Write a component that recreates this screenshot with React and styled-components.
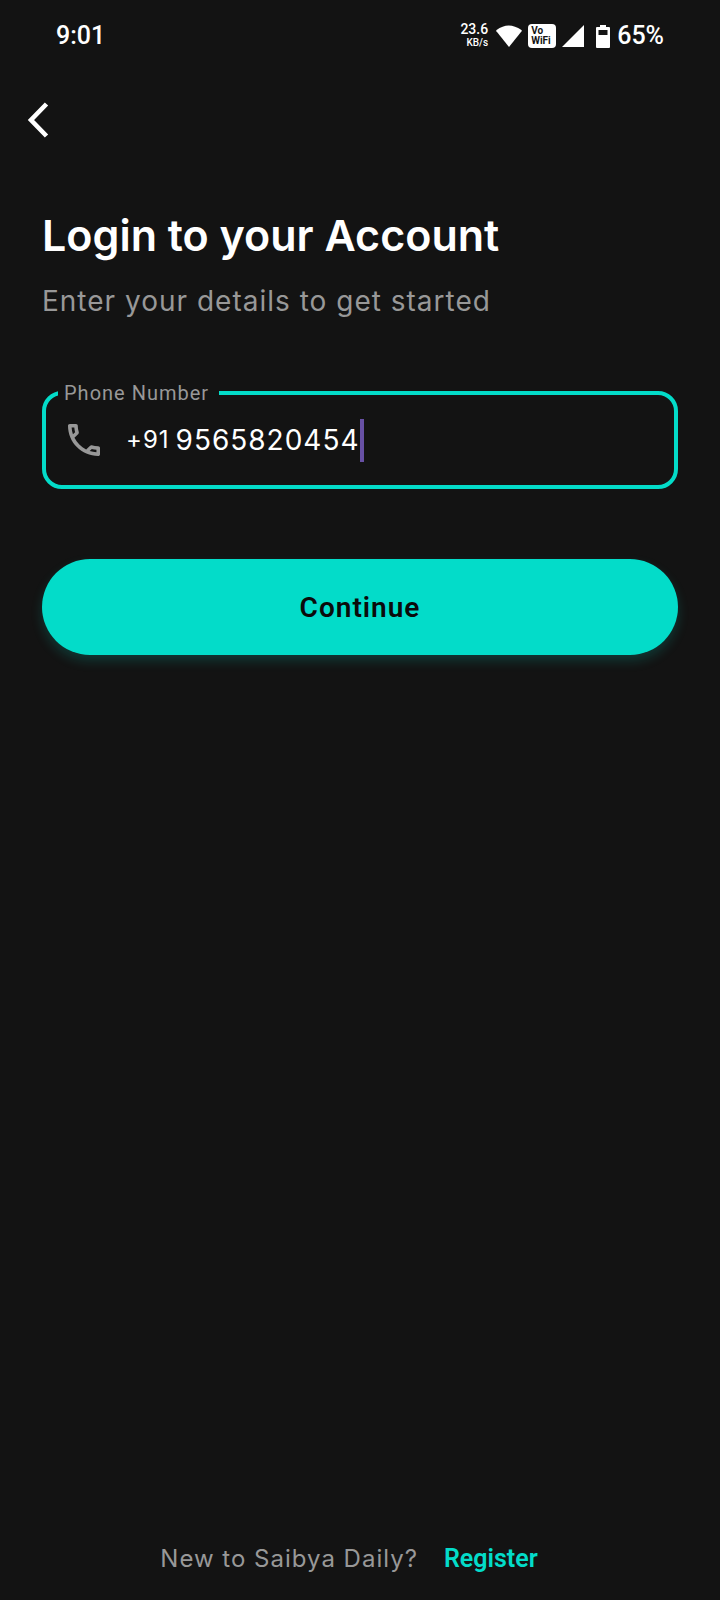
import React, { useState } from "react";
import styled, { createGlobalStyle } from "styled-components";

const teal = "#03dcc9";
const muted = "#989898";

const GlobalStyle = createGlobalStyle`
  * { box-sizing: border-box; }
  body { margin: 0; background: #131313; }
  button, input { font: inherit; letter-spacing: inherit; }
`;

const Screen = styled.div`
  min-height: 100vh;
  display: flex;
  flex-direction: column;
  background: #131313;
  color: #fff;
  font-family: Inter, "Liberation Sans", sans-serif;
`;

const StatusBar = styled.header`
  display: flex;
  align-items: center;
  justify-content: space-between;
  height: 72px;
  padding: 0 56px;
  font-family: Roboto, sans-serif;
  font-size: 25px;
  font-weight: 500;
  line-height: 28px;
`;

const StatusIcons = styled.div`
  display: flex;
  align-items: center;
  gap: 6px;
  svg { display: block; }
`;

const NetSpeed = styled.div`
  display: flex;
  flex-direction: column;
  align-items: flex-end;
  padding: 0 2px 2px 0;
  font-size: 14px;
  line-height: 16px;
`;

const NetUnit = styled.span`
  font-size: 10px;
  line-height: 12px;
`;

const VoWifi = styled.span`
  display: flex;
  flex-direction: column;
  width: 28px;
  height: 24px;
  padding: 2px 3px;
  border-radius: 4px;
  background: #fff;
  color: #131313;
  font-size: 10px;
  font-weight: 700;
  line-height: 10px;
`;

const Battery = styled.span`
  display: flex;
  align-items: center;
  gap: 7px;
  padding-left: 6px;
`;

const BackButton = styled.button`
  align-self: flex-start;
  display: flex;
  margin-top: 26px;
  padding: 4px 24px;
  border: 0;
  background: none;
  color: #fff;
`;

const Form = styled.form`
  display: flex;
  flex-direction: column;
  padding: 65px 42px 0;
`;

const Title = styled.h1`
  margin: 0;
  font-size: 43px;
  font-weight: 600;
  line-height: 56px;
`;

const Subtitle = styled.p`
  margin: 20px 0 0;
  color: ${muted};
  font-size: 28px;
  line-height: 36px;
  letter-spacing: 1px;
`;

const Field = styled.fieldset`
  min-width: 0;
  margin: 62px 0 0;
  padding: 0 22px;
  border: 4px solid ${teal};
  border-radius: 20px;
`;

const Legend = styled.legend`
  margin-left: -10px;
  padding: 0 10px 0 6px;
  color: ${muted};
  font-family: Roboto, sans-serif;
  font-size: 20px;
  line-height: 24px;
  letter-spacing: 1px;
`;

const FieldRow = styled.div`
  display: flex;
  align-items: center;
  height: 80px;
  padding-bottom: 10px;
`;

const Prefix = styled.span`
  margin: 0 6px 0 26px;
  font-size: 24px;
  line-height: 44px;
  letter-spacing: 1px;
`;

const PhoneInput = styled.input`
  field-sizing: content;
  min-width: 1px;
  padding: 0;
  border: 0;
  outline: 0;
  background: none;
  color: #fff;
  font-size: 28px;
  line-height: 44px;
  letter-spacing: 1px;
`;

const Caret = styled.span`
  width: 4px;
  height: 43px;
  background: #6750a4;
`;

const Continue = styled.button`
  height: 96px;
  margin-top: 70px;
  border: 0;
  border-radius: 48px;
  background: ${teal};
  box-shadow: 0 6px 12px rgba(3, 220, 201, 0.18);
  color: #0b0b0b;
  font-family: Roboto, sans-serif;
  font-size: 28px;
  font-weight: 600;
  letter-spacing: 1px;
`;

const Footer = styled.footer`
  display: flex;
  justify-content: center;
  gap: 26px;
  margin-top: auto;
  padding: 0 22px 25px 0;
  color: ${muted};
  font-size: 24px;
  line-height: 32px;
`;

const FooterText = styled.span`
  letter-spacing: 1px;
`;

const RegisterLink = styled.a`
  color: ${teal};
  font-family: Roboto, sans-serif;
  font-size: 25px;
  font-weight: 600;
  text-decoration: none;
`;

const WifiIcon = () => (
  <svg width="26" height="22" viewBox="0 0 26 22" aria-hidden="true">
    <path d="M13 22 .4 6.2Q0 5.6.6 5.1 12.500-4.100 25.400 5.100q.6.5.2 1.100Z" fill="#fff" />
  </svg>
);

const SignalIcon = () => (
  <svg width="22" height="22" viewBox="0 0 22 22" aria-hidden="true">
    <path d="M0 22 22 0V22Z" fill="#fff" />
  </svg>
);

const BatteryIcon = () => (
  <svg width="14" height="23" viewBox="0 0 14 23" aria-hidden="true">
    <path
      fill="#fff"
      fillRule="evenodd"
      d="M4 0h6v2h3q1 0 1 1v19q0 1-1 1H1q-1 0-1-1V3q0-1 1-1h3ZM2.500 5v5h9V5Z"
    />
  </svg>
);

const BackIcon = () => (
  <svg width="28" height="36" viewBox="0 0 28 36" fill="none" aria-hidden="true">
    <path d="M22.500 2 7 18 22.500 34" stroke="currentColor" strokeWidth="4.600" />
  </svg>
);

const PhoneIcon = () => (
  <svg width="32" height="32" viewBox="3 3 18 18" aria-hidden="true">
    <path
      fill={muted}
      d="M6.540 5c.06.89.21 1.760.45 2.590l-1.200 1.200c-.41-1.200-.67-2.470-.76-3.790h1.510m9.860 12.020c.85.24 1.720.39 2.600.45v1.490c-1.320-.09-2.590-.35-3.800-.75l1.200-1.190M7.500 3H4c-.55 0-1 .45-1 1 0 9.390 7.610 17 17 17 .55 0 1-.45 1-1v-3.490c0-.55-.45-1-1-1-1.240 0-2.450-.2-3.570-.57-.1-.04-.21-.05-.31-.05-.26 0-.51.1-.71.29l-2.200 2.200c-2.830-1.450-5.150-3.760-6.590-6.590l2.200-2.200c.28-.28.36-.67.25-1.020C8.700 6.450 8.500 5.250 8.500 4c0-.55-.45-1-1-1z"
    />
  </svg>
);

export default function App() {
  const [phone, setPhone] = useState("9565820454");
  return (
    <>
      <GlobalStyle />
      <Screen>
        <StatusBar>
          <time>9:01</time>
          <StatusIcons>
            <NetSpeed>
              23.6
              <NetUnit>KB/s</NetUnit>
            </NetSpeed>
            <WifiIcon />
            <VoWifi>
              <span>Vo</span>
              <span>WiFi</span>
            </VoWifi>
            <SignalIcon />
            <Battery>
              <BatteryIcon />
              65%
            </Battery>
          </StatusIcons>
        </StatusBar>
        <BackButton type="button" aria-label="Back">
          <BackIcon />
        </BackButton>
        <Form onSubmit={(e) => e.preventDefault()}>
          <Title>Login to your Account</Title>
          <Subtitle>Enter your details to get started</Subtitle>
          <Field>
            <Legend>
              <label htmlFor="phone">Phone Number</label>
            </Legend>
            <FieldRow>
              <PhoneIcon />
              <Prefix>+91</Prefix>
              <PhoneInput
                id="phone"
                type="tel"
                value={phone}
                onChange={(e) => setPhone(e.target.value)}
              />
              <Caret />
            </FieldRow>
          </Field>
          <Continue type="submit">Continue</Continue>
        </Form>
        <Footer>
          <FooterText>New to Saibya Daily?</FooterText>
          <RegisterLink href="#register">Register</RegisterLink>
        </Footer>
      </Screen>
    </>
  );
}
